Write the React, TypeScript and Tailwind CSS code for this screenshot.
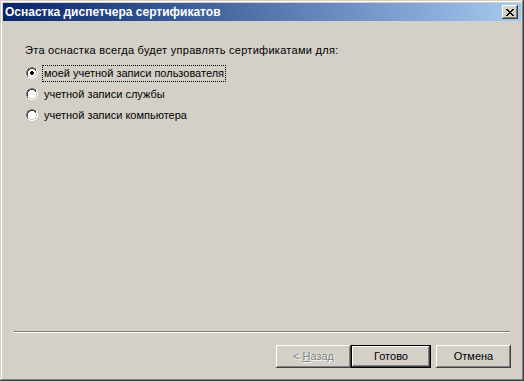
const raised =
  "shadow-[inset_-1px_-1px_#404040,inset_1px_1px_#ffffff,inset_-2px_-2px_#808080,inset_2px_2px_#d4d0c8]";

function Radio({ checked }: { checked?: boolean }) {
  return (
    <svg width="12" height="12" viewBox="0 0 12 12" className="shrink-0">
      <path d="M4 0h4v1h2v1h1v2h1v4h-1v2h-1v1h-2v1h-4v-1h-2v-1h-1v-2h-1v-4h1v-2h1v-1h2z" fill="#ffffff" />
      <path d="M4 0h4v1h-4zM2 1h2v1h-2zM8 1h2v1h-2zM1 2h1v2h-1zM0 4h1v4h-1zM1 8h1v2h-1z" fill="#808080" />
      <path d="M4 1h4v1h-4zM2 2h2v1h-2zM8 2h2v1h-2zM1 4h1v4h-1zM2 3h1v1h-1zM9 3h1v1h-1z" fill="#404040" />
      <path d="M10 2h1v2h-1zM11 4h1v4h-1zM10 8h1v2h-1zM8 10h2v1h-2zM2 10h2v1h-2zM4 11h4v1h-4z" fill="#ffffff" />
      <path d="M10 4h1v4h-1zM9 8h1v2h-1zM8 9h1v1h-1zM4 10h4v1h-4zM2 9h2v1h-2z" fill="#d4d0c8" />
      {checked && <path d="M5 4h2v1h1v2h-1v1h-2v-1h-1v-2h1z" fill="#000000" />}
    </svg>
  );
}

const options = [
  "моей учетной записи пользователя",
  "учетной записи службы",
  "учетной записи компьютера",
];

export default function App() {
  return (
    <div
      className={
        "flex h-[381px] w-[524px] flex-col bg-[#d4d0c8] p-[3px] font-['Liberation_Sans',Arial,sans-serif] text-[11px] leading-[13px] text-black " +
        "shadow-[inset_-1px_-1px_#404040,inset_1px_1px_#d4d0c8,inset_-2px_-2px_#808080,inset_2px_2px_#ffffff]"
      }
    >
      <div className="flex h-[18px] items-center bg-gradient-to-r from-[#0a246a] to-[#a6caf0] pl-[2px] pr-[3px]">
        <span className="flex-1 text-[12px] font-bold text-white">Оснастка диспетчера сертификатов</span>
        <div className={"flex h-[14px] w-[16px] items-center justify-center bg-[#d4d0c8] " + raised}>
          <svg width="8" height="7" viewBox="0 0 8 7">
            <path d="M0 0h2v1h1v1h2v-1h1v-1h2v1h-1v1h-1v1h-1v1h1v1h1v1h1v1h-2v-1h-1v-1h-2v1h-1v1h-2v-1h1v-1h1v-1h1v-1h-1v-1h-1v-1h-1z" fill="#000000" />
          </svg>
        </div>
      </div>

      <div className="flex flex-1 flex-col">
        <p className="ml-[22px] mt-[23px] tracking-[0.28px]">Эта оснастка всегда будет управлять сертификатами для:</p>
        <div className="ml-[23px] mt-[8px] flex flex-col gap-[5px]">
          {options.map((label, i) => (
            <div key={label} className="flex h-[16px] items-center gap-[4px]">
              <Radio checked={i === 0} />
              <span
                className={
                  "px-[1px] py-[1px] " +
                  (i === 0 ? "border border-dotted border-black" : "border border-transparent")
                }
              >
                {label}
              </span>
            </div>
          ))}
        </div>

        <div className="mx-[11px] mt-auto h-[2px] border-t border-b border-t-[#808080] border-b-white" />

        <div className="mb-[10px] mr-[10px] mt-[12px] flex justify-end">
          <button className={"h-[23px] w-[75px] bg-[#d4d0c8] text-[#808080] [text-shadow:1px_1px_#ffffff] " + raised}>
            &lt; <span className="underline">Н</span>азад
          </button>
          <button className="h-[23px] w-[80px] border border-black bg-[#d4d0c8]">
            <span className={"flex h-full w-full items-center justify-center " + raised}>Готово</span>
          </button>
          <button className={"ml-[5px] h-[23px] w-[75px] bg-[#d4d0c8] " + raised}>Отмена</button>
        </div>
      </div>
    </div>
  );
}
